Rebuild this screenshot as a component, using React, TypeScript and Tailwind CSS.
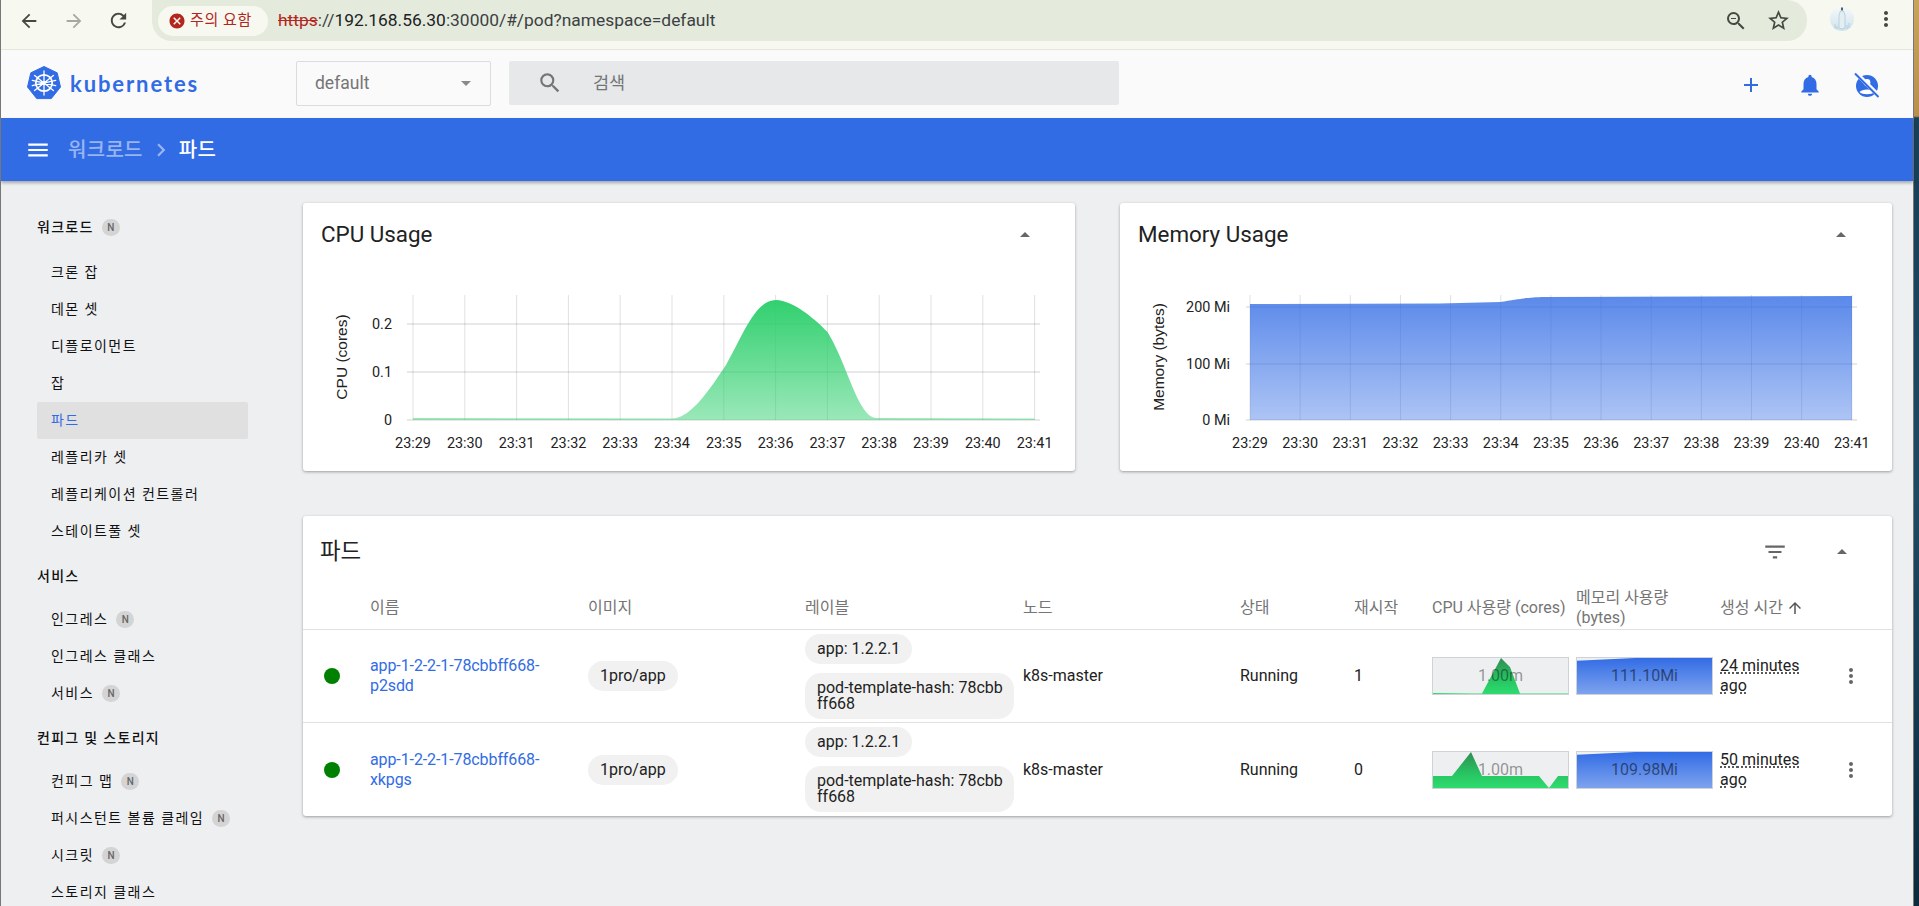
import React from "react";
import {
  MdAdd,
  MdArrowBack,
  MdArrowDropDown,
  MdArrowDropUp,
  MdArrowForward,
  MdArrowUpward,
  MdCancel,
  MdChevronRight,
  MdFilterList,
  MdMenu,
  MdMoreVert,
  MdNotifications,
  MdRefresh,
  MdSearch,
  MdStarBorder,
  MdZoomOut,
} from "react-icons/md";

const FONT = "font-['Roboto','Noto_Sans_CJK_KR',sans-serif]";
const TIMES = ["23:29", "23:30", "23:31", "23:32", "23:33", "23:34", "23:35", "23:36", "23:37", "23:38", "23:39", "23:40", "23:41"];

const NavBadge = () => (
  <span className="ml-2 flex h-[17px] w-[18px] items-center justify-center rounded-full bg-[#d4d4d4] text-[10px] font-medium tracking-normal text-[#666]">N</span>
);

const NavHeader = ({ label, badge, mt }: { label: string; badge?: boolean; mt: string }) => (
  <div className={`flex h-[37px] items-center pl-[36px] text-[14px] font-medium tracking-[1.3px] text-[#111] ${mt}`}>
    {label}
    {badge && <NavBadge />}
  </div>
);

const NavItem = ({ label, badge, active }: { label: string; badge?: boolean; active?: boolean }) => (
  <div
    className={`ml-[36px] flex h-[37px] w-[211px] items-center rounded-[2px] pl-[14px] text-[14px] tracking-[1.45px] ${
      active ? "bg-[#e0e0e0] text-[#326ce5]" : "text-[#111]"
    }`}
  >
    {label}
    {badge && <NavBadge />}
  </div>
);

const Sidebar = () => (
  <nav className="h-full w-[302px] shrink-0 overflow-hidden pt-[28px]">
    <NavHeader label="워크로드" badge mt="" />
    <div className="mt-[8px]">
      <NavItem label="크론 잡" />
      <NavItem label="데몬 셋" />
      <NavItem label="디플로이먼트" />
      <NavItem label="잡" />
      <NavItem label="파드" active />
      <NavItem label="레플리카 셋" />
      <NavItem label="레플리케이션 컨트롤러" />
      <NavItem label="스테이트풀 셋" />
    </div>
    <NavHeader label="서비스" mt="mt-[8px]" />
    <div className="mt-[6px]">
      <NavItem label="인그레스" badge />
      <NavItem label="인그레스 클래스" />
      <NavItem label="서비스" badge />
    </div>
    <NavHeader label="컨피그 및 스토리지" mt="mt-[8px]" />
    <div className="mt-[6px]">
      <NavItem label="컨피그 맵" badge />
      <NavItem label="퍼시스턴트 볼륨 클레임" badge />
      <NavItem label="시크릿" badge />
      <NavItem label="스토리지 클래스" />
    </div>
  </nav>
);

const KubeLogo = () => (
  <svg width="34" height="34" viewBox="0 0 34 34">
    <path d="M17 0.5 L30.2 6.8 L33.5 21 L24.3 32.6 L9.7 32.6 L0.5 21 L3.8 6.8 Z" fill="#326ce5" stroke="#326ce5" strokeLinejoin="round" />
    <g stroke="#fff" fill="none" strokeLinecap="round">
      <circle cx="17" cy="17" r="8.2" strokeWidth="1.8" />
      <circle cx="17" cy="17" r="1.5" fill="#fff" strokeWidth="0.6" />
      <path strokeWidth="1.3" d="M17 5 V29 M7.6 9.5 L26.4 24.5 M26.4 9.5 L7.6 24.5 M5.3 19.7 L28.7 14.3 M28.7 19.7 L5.3 14.3" />
    </g>
  </svg>
);

// account circle with a slash through it, the icon is not in the packages
const NoAccount = () => (
  <svg width="28" height="28" viewBox="0 0 28 28">
    <circle cx="14" cy="15" r="11" fill="#326ce5" />
    <circle cx="14" cy="11.5" r="3.4" fill="#fff" />
    <path d="M6.5 21 C9 17.5 19 17.5 21.5 21 C19 24 9 24 6.5 21 Z" fill="#fff" />
    <path d="M3 2 L26 25" stroke="#fafafa" strokeWidth="4.5" />
    <path d="M2 2.5 L25.5 26" stroke="#326ce5" strokeWidth="2" />
  </svg>
);

const Avatar = () => (
  <svg width="24" height="24" viewBox="0 0 24 24">
    <defs>
      <linearGradient id="avatar" x1="0" y1="0" x2="0" y2="1">
        <stop offset="0" stopColor="#f4f8fa" />
        <stop offset="1" stopColor="#cfe3ec" />
      </linearGradient>
    </defs>
    <circle cx="12" cy="12" r="12" fill="url(#avatar)" />
    <rect x="11" y="0.5" width="2" height="3" fill="#50606a" />
    <path d="M10.5 4 H13.5 L15 8 V21 Q12 23 9 21 V8 Z" fill="#e3eef3" stroke="#a9c4d2" strokeWidth="0.7" />
    <path d="M5 17 V22 M7 19 V22 M17 18 V22 M19 16 V21" stroke="#a9c9da" strokeWidth="0.8" />
  </svg>
);

const BrowserBar = () => (
  <div className="flex h-[49px] items-start bg-[#f7f9f0] text-[#45493f]">
    <div className="flex w-[152px] shrink-0 items-center pl-[17px] pt-[9px]">
      <MdArrowBack size={22} />
      <MdArrowForward size={22} className="ml-[23px] text-[#a5a9a0]" />
      <MdRefresh size={23} className="ml-[22px]" />
    </div>
    <div className="-ml-[1px] flex h-[41px] w-[1655px] shrink-0 items-center rounded-b-[20px] rounded-r-[20px] bg-[#e4ebdc] pl-[6px]">
      <div className="flex h-[30px] w-[110px] items-center rounded-full bg-[#f7f9f0] pl-[10px] text-[15px] tracking-[0.6px] whitespace-nowrap text-[#b3261e]">
        <MdCancel size={18} className="mr-[4px] shrink-0" />
        주의 요함
      </div>
      <div className="ml-[10px] text-[17.4px] text-[#3c4043]">
        <span className="text-[#b3261e] line-through">https</span>
        ://<span className="text-[#202124]">192.168.56.30</span>:30000/#/pod?namespace=default
      </div>
      <div className="ml-auto flex items-center gap-[18px] pr-[16px]">
        <MdZoomOut size={24} />
        <MdStarBorder size={25} />
      </div>
    </div>
    <div className="flex items-center pl-[23px] pt-[7px]">
      <Avatar />
      <MdMoreVert size={24} className="ml-[20px]" />
    </div>
  </div>
);

const Toolbar = () => (
  <div className="flex h-[69px] items-center border-t border-[#e6e6da] bg-[#fafafa] pb-[2px]">
    <div className="ml-[26px] flex w-[269px] items-center">
      <KubeLogo />
      <span className="ml-[9px] font-['Lato','Roboto',sans-serif] text-[22px] font-bold tracking-[1.9px] text-[#326ce5]">kubernetes</span>
    </div>
    <div className="flex h-[45px] w-[195px] items-center justify-between rounded-[2px] border border-[#dcdcdc] pl-[18px] pr-[12px] text-[17.5px] text-[#757575]">
      default
      <MdArrowDropDown size={24} className="text-[#8a8a8a]" />
    </div>
    <div className="ml-[18px] flex h-[44px] w-[610px] items-center rounded-[2px] bg-[#e6e8e9] pl-[28px] text-[17.5px] text-[#757575]">
      <MdSearch size={26} />
      <span className="ml-[30px]">검색</span>
    </div>
    <div className="ml-auto mt-[3px] flex items-center pr-[32px] text-[#326ce5]">
      <MdAdd size={24} />
      <MdNotifications size={26} className="ml-[34px]" />
      <span className="ml-[30px]">
        <NoAccount />
      </span>
    </div>
  </div>
);

const ActionBar = () => (
  <div className="z-10 flex h-[63px] items-center bg-[#326ce5] pl-[25px] text-[20px] font-medium tracking-[0.3px] text-white shadow-[0_2px_3px_rgba(0,0,0,0.3)]">
    <MdMenu size={26} className="-ml-[1px]" />
    <span className="ml-[17px] text-white/50">워크로드</span>
    <MdChevronRight size={26} className="mx-[5px] text-white/50" />
    <span>파드</span>
  </div>
);

const Axis = ({ x0, step, baseY, labelY }: { x0: number; step: number; baseY: number; labelY: number }) => (
  <g>
    {TIMES.map((t, i) => (
      <g key={t}>
        <line x1={x0 + i * step} x2={x0 + i * step} y1={0} y2={baseY} stroke="#000" strokeOpacity="0.12" />
        <text x={x0 + i * step} y={labelY} textAnchor="middle" fontSize="14.4" fill="#222">
          {t}
        </text>
      </g>
    ))}
  </g>
);

const CpuChart = () => (
  <svg width="772" height="176" style={{ fontFamily: "Roboto, sans-serif" }}>
    <defs>
      <linearGradient id="cpu" x1="0" y1="0" x2="0" y2="1">
        <stop offset="0" stopColor="#2dcf6c" stopOpacity="0.98" />
        <stop offset="1" stopColor="#2dcf6c" stopOpacity="0.48" />
      </linearGradient>
    </defs>
    <Axis x0={110} step={51.8} baseY={125} labelY={153} />
    {[
      [29, "0.2"],
      [77, "0.1"],
      [125, "0"],
    ].map(([y, t]) => (
      <g key={t}>
        <line x1="104" x2="737" y1={y} y2={y} stroke="#000" strokeOpacity="0.09" strokeWidth="2" />
        <text x="89" y={Number(y) + 5} textAnchor="end" fontSize="14.4" fill="#222">
          {t}
        </text>
      </g>
    ))}
    <path
      fill="url(#cpu)"
      d="M110 123 L369 123.5 C385 123 400 105 423 70 C440 40 452 5 473 5 C490 6 510 22 524.5 37 C545 70 555 123 574 123 L731.5 123.5 V125 H110 Z"
    />
    <text transform="translate(40 62) rotate(-90)" textAnchor="middle" dominantBaseline="middle" fontSize="15.5" fill="#222" style={{ fontFamily: "Liberation Sans, sans-serif" }}>
      CPU (cores)
    </text>
  </svg>
);

const MemoryChart = () => (
  <svg width="772" height="176" style={{ fontFamily: "Roboto, sans-serif" }}>
    <defs>
      <linearGradient id="mem" x1="0" y1="0" x2="0" y2="1">
        <stop offset="0" stopColor="#326ce5" stopOpacity="0.8" />
        <stop offset="1" stopColor="#326ce5" stopOpacity="0.4" />
      </linearGradient>
    </defs>
    <Axis x0={130} step={50.15} baseY={125} labelY={153} />
    {[
      [12, "200 Mi"],
      [69, "100 Mi"],
      [125, "0 Mi"],
    ].map(([y, t]) => (
      <g key={t}>
        <line x1="126" x2="737" y1={y} y2={y} stroke="#000" strokeOpacity="0.09" strokeWidth="2" />
        <text x="110" y={Number(y) + 5} textAnchor="end" fontSize="14.4" fill="#222">
          {t}
        </text>
      </g>
    ))}
    <path fill="url(#mem)" d="M130 9 L320 8.5 L380 7 C400 4 405 2.5 425 2 L580 1.5 L732 1 V125 H130 Z" />
    <text transform="translate(40 62) rotate(-90)" textAnchor="middle" dominantBaseline="middle" fontSize="15.5" fill="#222" style={{ fontFamily: "Liberation Sans, sans-serif" }}>
      Memory (bytes)
    </text>
  </svg>
);

const ChartCard = ({ title, caretPad, children }: { title: string; caretPad: string; children: React.ReactNode }) => (
  <div className="h-[268px] w-[772px] rounded-[3px] bg-white shadow-[0_1px_3px_rgba(0,0,0,0.35)]">
    <div className={`flex h-[64px] items-center justify-between pl-[18px] ${caretPad}`}>
      <span className="text-[22.4px] text-[#222]">{title}</span>
      <MdArrowDropUp size={24} className="text-[#666]" />
    </div>
    <div className="mt-[28px]">{children}</div>
  </div>
);

const Spark = ({ kind, points, label }: { kind: "cpu" | "mem"; points: string; label: string }) => (
  <div className="relative h-[38px] w-[137px] border border-[#cfd2d6] bg-[#eeeff1]">
    <svg width="135" height="36" viewBox="0 0 135 36" className="absolute left-0 top-0">
      <defs>
        <linearGradient id="memSpark" x1="0" y1="0" x2="0" y2="1">
          <stop offset="0" stopColor="#326ce5" />
          <stop offset="1" stopColor="#7ea3ee" />
        </linearGradient>
        <linearGradient id="cpuSpark" gradientUnits="userSpaceOnUse" x1="0" y1="0" x2="0" y2="36">
          <stop offset="0" stopColor="#2f8f52" />
          <stop offset="0.6" stopColor="#28c463" />
          <stop offset="1" stopColor="#2ddc6e" />
        </linearGradient>
      </defs>
      <polygon points={points} fill={kind === "cpu" ? "url(#cpuSpark)" : "url(#memSpark)"} />
    </svg>
    <div className={`absolute inset-0 flex items-center justify-center text-[16px] ${kind === "cpu" ? "text-black/40" : "text-black/50"}`}>{label}</div>
  </div>
);

const Chip = ({ children }: { children: React.ReactNode }) => (
  <span className="block w-fit max-w-[209px] break-all rounded-[16px] bg-[#f1f1f1] py-[7px] pl-[12px] pr-[6px] text-[16px] leading-4 text-[#222]">{children}</span>
);

const COLS = "grid grid-cols-[67px_218px_217px_218px_217px_114px_78px_144px_144px_106px_66px] items-center";

const MEM_POINTS = "0,2.7 58,0 135,0 135,36 0,36";

const Row = ({
  suffix,
  restarts,
  age,
  cpu,
  memLabel,
}: {
  suffix: string;
  restarts: string;
  age: string;
  cpu: string;
  memLabel: string;
}) => (
  <div className={`${COLS} h-[93px] border-b border-[#e0e0e0] text-[16px] leading-5 text-[#222] last:border-b-0`}>
    <div className="pl-[21px]">
      <div className="h-[16px] w-[16px] rounded-full bg-[#008000]" />
    </div>
    <div className="max-w-[180px] tracking-[-0.1px] text-[#326ce5]">app-1-2-2-1-78cbbff668-{suffix}</div>
    <div>
      <span className="block w-fit rounded-[16px] bg-[#f1f1f1] px-[12px] py-[7px] text-[16px] leading-4 text-[#222]">1pro/app</span>
    </div>
    <div className="flex flex-col gap-[9px]">
      <span className="block w-fit rounded-[16px] bg-[#f1f1f1] px-[12px] py-[7px] text-[16px] leading-4 text-[#222]">app: 1.2.2.1</span>
      <Chip>pod-template-hash: 78cbbff668</Chip>
    </div>
    <div>k8s-master</div>
    <div>Running</div>
    <div>{restarts}</div>
    <div>
      <Spark kind="cpu" points={cpu} label="1.00m" />
    </div>
    <div>
      <Spark kind="mem" points={MEM_POINTS} label={memLabel} />
    </div>
    <div className="max-w-[100px] underline decoration-dotted underline-offset-2">{age} minutes ago</div>
    <div className="pl-[13px] text-[#666]">
      <MdMoreVert size={24} />
    </div>
  </div>
);

const PodsCard = () => (
  <div className="mt-[45px] w-[1589px] rounded-[3px] bg-white shadow-[0_1px_3px_rgba(0,0,0,0.35)]">
    <div className="flex h-[70px] items-center pl-[17px] pr-[38px] pt-[2px]">
      <span className="text-[22.4px] text-[#222]">파드</span>
      <MdFilterList size={26} className="ml-auto text-[#666]" />
      <MdArrowDropUp size={24} className="ml-[42px] text-[#666]" />
    </div>
    <div className={`${COLS} h-[44px] border-b border-[#e0e0e0] text-[16px] leading-5 text-[#757575]`}>
      <div />
      <div>이름</div>
      <div>이미지</div>
      <div>레이블</div>
      <div>노드</div>
      <div>상태</div>
      <div>재시작</div>
      <div className="whitespace-nowrap">CPU 사용량 (cores)</div>
      <div className="max-w-[125px]">메모리 사용량 (bytes)</div>
      <div className="flex items-center">
        생성 시간
        <MdArrowUpward size={18} className="ml-[3px] text-[#555]" />
      </div>
      <div />
    </div>
    <Row suffix="p2sdd" restarts="1" age="24" memLabel="111.10Mi" cpu="0,35 40,35.5 49,35.5 68,0 77,9 87,35.5 135,35.5 135,36 0,36" />
    <Row suffix="xkpgs" restarts="0" age="50" memLabel="109.98Mi" cpu="0,24 19,24 38,0 49,24 106,24 116,36 125,24 135,24 135,36 0,36" />
  </div>
);

export default function App() {
  return (
    <div className={`flex h-[906px] w-[1919px] overflow-hidden border-l border-[#777] bg-[#eeeff1] ${FONT}`}>
      <div className="flex min-w-0 flex-1 flex-col">
        <BrowserBar />
        <Toolbar />
        <ActionBar />
        <div className="flex min-h-0 flex-1">
          <Sidebar />
          <main className="pt-[22px]">
            <div className="flex w-[1589px] justify-between">
              <ChartCard title="CPU Usage" caretPad="pr-[38px]">
                <CpuChart />
              </ChartCard>
              <ChartCard title="Memory Usage" caretPad="pr-[39px]">
                <MemoryChart />
              </ChartCard>
            </div>
            <PodsCard />
          </main>
        </div>
      </div>
      <div className="w-[6px] shrink-0 border-l border-[#777] bg-[linear-gradient(to_bottom,#c9a45c_0,#b98f4e_116px,#173f57_118px,#1d4a63_500px,#0d2a3a_906px)]" />
    </div>
  );
}
